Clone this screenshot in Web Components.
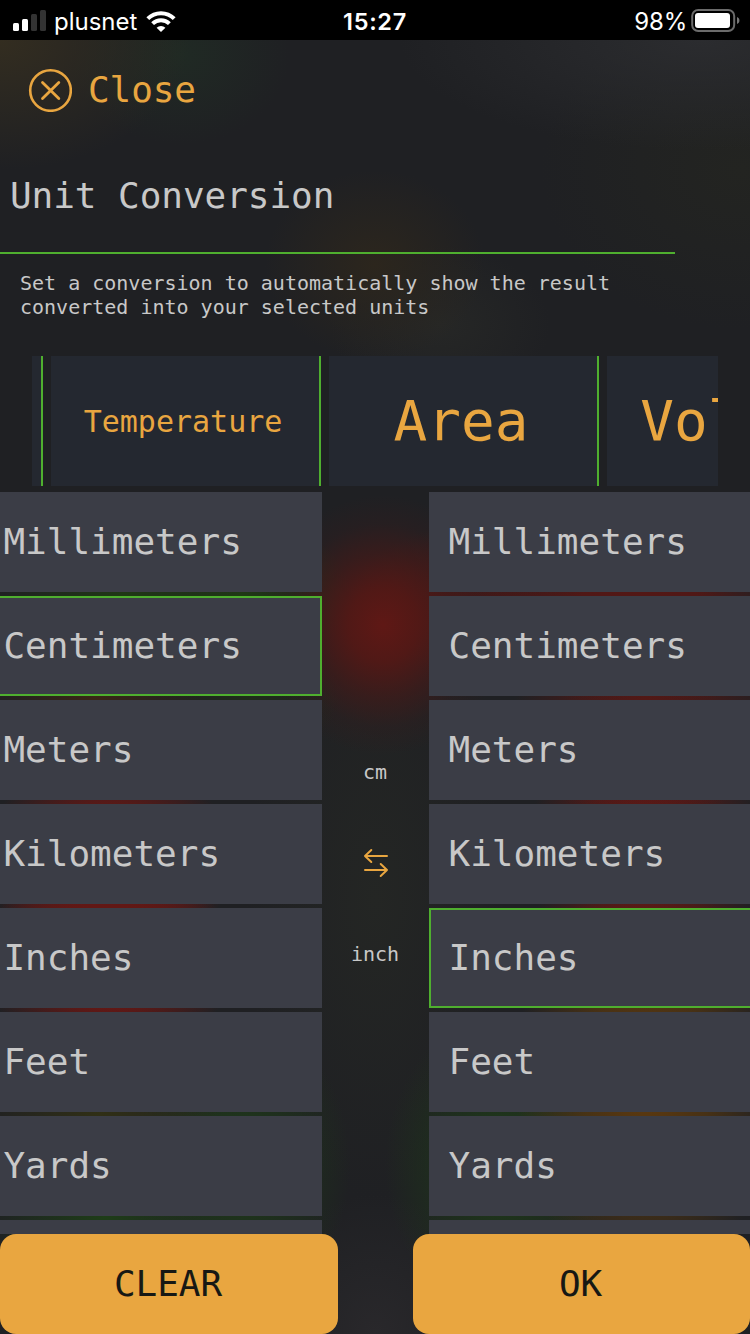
<!DOCTYPE html>
<html lang="en">
<head>
<meta charset="utf-8">
<title>Unit Conversion</title>
<style>
html,body{margin:0;height:100%;background:#202124;overflow:hidden}
</style>
</head>
<body>
<unit-conversion-screen></unit-conversion-screen>
<script>
function define(name, html, setup) {
  customElements.define(name, class extends HTMLElement {
    constructor() {
      super();
      const t = document.createElement('template');
      t.innerHTML = html;
      this.attachShadow({mode: 'open'}).appendChild(t.content.cloneNode(true));
    }
    connectedCallback() { if (setup) setup(this, this.shadowRoot); }
  });
}

define('status-bar', `
<style>
:host{display:grid;grid-template-columns:1fr auto 1fr;align-items:center;height:40px;box-sizing:border-box;padding:0 10px 0 13px;background:#000;color:#fff;font:400 24px/40px Inter,sans-serif}
.l,.r{display:flex;align-items:center;height:40px}
.l svg,.r svg{display:block;flex:none}
.r{justify-content:flex-end}
.c{font-weight:600;font-size:23.5px;letter-spacing:.7px;padding:2px 3px 0 0}
.carrier{margin:2px 9px 0 8px;letter-spacing:0}
.pct{margin:2px 4px 0 0;letter-spacing:-.2px}
</style>
<div class="l">
<svg width="33" height="40"><g fill="#fff"><rect x="0" y="22" width="6" height="8" rx="1.5"/><rect x="9" y="18" width="6" height="12" rx="1.5"/></g><g fill="#333"><rect x="18" y="13" width="6" height="17" rx="1.5"/><rect x="27" y="9" width="6" height="21" rx="1.5"/></g></svg>
<span class="carrier">plusnet</span>
<svg width="30" height="40" viewBox="0 0 30 40"><g fill="none" stroke="#fff" stroke-width="4"><path d="M1.8 17.600a18.700 18.700 0 0 1 26.400 0"/><path d="M6.600 22.600a12 12 0 0 1 16.800 0"/></g><path d="M15 31l-4.400-4.300a6.300 6.300 0 0 1 8.800 0z" fill="#fff"/></svg>
</div>
<div class="c">15:27</div>
<div class="r"><span class="pct">98%</span>
<svg width="49" height="40" viewBox="0 0 49 40"><rect x="1.2" y="9" width="42" height="21" rx="6" fill="none" stroke="#6b6b6b" stroke-width="2"/><rect x="4" y="12" width="35" height="15" rx="3" fill="#fff"/><path d="M46 16c2 .8 2.400 2 2.400 3.500s-.4 2.700-2.400 3.500z" fill="#777"/></svg></div>`);

define('close-button', `
<style>
:host{display:flex;align-items:center;height:100px;padding-left:28px;color:#e9a640;font:36px/42px "DejaVu Sans Mono",monospace;letter-spacing:-.1px}
svg{display:block;margin-right:16px}
</style>
<svg width="44" height="44" fill="none" stroke="currentColor"><circle cx="22.500" cy="22.500" r="20.300" stroke-width="2.600"/><path d="M14.500 14.500l16.300 16M30.800 14.500l-16.300 16" stroke-width="2.800" stroke-linecap="round"/></svg><span><slot></slot></span>`);

define('page-heading', `
<style>
:host{display:block;color:#c8c8c8;font:36px/42px "DejaVu Sans Mono",monospace}
h1{font:inherit;letter-spacing:-.05px;margin:0;padding:35px 0 35px 10px;width:675px;box-sizing:border-box;border-bottom:2px solid #4faf2f}
p{margin:0;font-size:20px;line-height:24px;padding:17px 100px 0 20px;height:102px;box-sizing:border-box}
</style>
<h1><slot name="title"></slot></h1><p><slot></slot></p>`);

define('category-tab', `
<style>
:host{display:flex;flex:none;align-items:center;justify-content:center;width:270px;height:130px;box-sizing:border-box;padding-right:4px;border-right:2px solid #4faf2f;background:#242830;color:#e9a640;font:56px/66px "DejaVu Sans Mono",monospace}
:host([small]){font-size:30px;line-height:36px;padding-top:2px}
:host([wide]){padding-right:0;padding-left:1px}
</style><slot></slot>`);

define('category-strip', `
<style>
:host{display:flex;gap:8px;justify-content:flex-start;margin:0 32px;height:130px;overflow:hidden}
::slotted(:first-child){margin-left:-259px}
</style><slot></slot>`);

define('unit-option', `
<style>
:host{display:flex;align-items:center;flex:none;height:100px;box-sizing:border-box;border:2px solid transparent;background:#3b3d46;background-clip:border-box;color:#c8c8c8;font:36px/42px "DejaVu Sans Mono",monospace}
:host([selected]){border-color:#4faf2f}
</style><slot></slot>`);

define('unit-list', `
<style>
:host{display:flex;flex-direction:column;gap:4px;overflow:hidden}
:host([side=left]) ::slotted(*){margin-left:-18px;padding-left:19.400px}
:host([side=right]) ::slotted(*){margin-right:-18px;padding-left:17.500px}
</style><slot></slot>`, (host, root) => {
  if (host.children.length) return;
  for (const unit of ['Millimeters','Centimeters','Meters','Kilometers','Inches','Feet','Yards']) {
    const o = document.createElement('unit-option');
    o.textContent = unit;
    if (unit === host.getAttribute('value')) o.setAttribute('selected', '');
    host.append(o);
  }
  host.append(document.createElement('unit-option'));
});

define('unit-swap', `
<style>
:host{display:flex;flex-direction:column;align-items:center;padding:268px 1px 0 0;color:#c8c8c8;font:20px/24px "DejaVu Sans Mono",monospace}
svg{display:block;margin:64px 0 62px 1px}
</style>
<slot name="from"></slot>
<svg width="26" height="32" viewBox="0 0 26 32" fill="none" stroke="#e9a640" stroke-width="2" stroke-linecap="round" stroke-linejoin="round"><path d="M24 8H2M8.300 2L2 8l6.300 6M2 22h22M17.700 16l6.300 6-6.300 6"/></svg>
<slot name="to"></slot>`);

define('action-button', `
<style>
:host{display:flex;align-items:center;justify-content:center;height:100px;box-sizing:border-box;padding-right:2px;border-radius:16px;background:#e9a640;color:#171814;font:36px/42px "DejaVu Sans Mono",monospace;letter-spacing:-.05px}
</style><slot></slot>`);

define('unit-conversion-screen', `
<style>
:host{display:flex;flex-direction:column;width:750px;height:1334px;overflow:hidden;
background:
radial-gradient(ellipse 125px 130px at 383px 625px,#5f1815 0,#551815e8 28%,#48191799 55%,#3a1b1b44 78%,#20212400 100%),
radial-gradient(ellipse 140px 100px at 640px 615px,#541815 0,#501816 45%,#20212400 100%),
radial-gradient(ellipse 150px 80px at 500px 600px,#451817 0,#45181799 50%,#20212400 100%),
radial-gradient(ellipse 130px 130px at 645px 700px,#541815 0,#54181599 50%,#20212400 100%),
radial-gradient(ellipse 115px 160px at 645px 850px,#6b1815 0,#5c1815bb 50%,#20212400 100%),
radial-gradient(ellipse 130px 210px at 645px 1080px,#5f3a0e 0,#553710bb 50%,#20212400 100%),
radial-gradient(ellipse 125px 105px at 108px 860px,#681815 0,#621815 45%,#20212400 100%),
radial-gradient(ellipse 125px 105px at 108px 960px,#681815 0,#621815 45%,#20212400 100%),
radial-gradient(ellipse 130px 80px at 125px 594px,#1f3915 0,#20212400 100%),
radial-gradient(ellipse 110px 80px at 240px 594px,#1f3915 0,#20212400 100%),
radial-gradient(ellipse 110px 60px at 95px 698px,#3a2716 0,#20212400 100%),
radial-gradient(ellipse 90px 60px at 250px 698px,#1f2c1a 0,#20212400 100%),
radial-gradient(ellipse 120px 60px at 100px 1114px,#302f15 0,#20212400 100%),
radial-gradient(ellipse 110px 150px at 240px 1165px,#1e3d18 0,#1e371aaa 45%,#20212400 100%),
radial-gradient(ellipse 120px 70px at 105px 1218px,#1e3d18 0,#20212400 100%),
radial-gradient(ellipse 115px 150px at 500px 1165px,#1e3f17 0,#1e371aaa 45%,#20212400 100%),
radial-gradient(ellipse 110px 95px at 375px 265px,#2c261d 0,#20212400 100%),
radial-gradient(ellipse 110px 80px at 440px 325px,#262726 0,#20212400 100%),
radial-gradient(ellipse 190px 130px at 0 40px,#332d20 0,#20212400 100%),
radial-gradient(ellipse 110px 90px at 180px 55px,#202a24 0,#20212400 100%),
radial-gradient(ellipse 300px 110px at 700px 40px,#2b2c2f 0,#20212400 100%),
radial-gradient(ellipse 200px 160px at 740px 170px,#232421 0,#20212400 100%),
radial-gradient(ellipse 130px 300px at 375px 900px,#242624 0,#20212400 100%),
radial-gradient(ellipse 120px 140px at 375px 1334px,#29282b 0,#20212400 100%),
#1f2023}
.units{display:grid;grid-template-columns:322px 107px 321px;height:742px;margin-top:6px;overflow:hidden}
unit-list{min-height:0}
.actions{display:flex;justify-content:space-between}
action-button:first-child{width:338px}
action-button:last-child{width:337px}
</style>
<status-bar></status-bar>
<close-button>Close</close-button>
<page-heading><span slot="title">Unit Conversion</span>Set a conversion to automatically show the result converted into your selected units</page-heading>
<category-strip><category-tab></category-tab><category-tab small>Temperature</category-tab><category-tab>Area</category-tab><category-tab wide>Volume</category-tab></category-strip>
<div class="units">
<unit-list side="left" value="Centimeters"></unit-list>
<unit-swap><span slot="from">cm</span><span slot="to">inch</span></unit-swap>
<unit-list side="right" value="Inches"></unit-list>
</div>
<div class="actions"><action-button>CLEAR</action-button><action-button>OK</action-button></div>`);
</script>
</body>
</html>
